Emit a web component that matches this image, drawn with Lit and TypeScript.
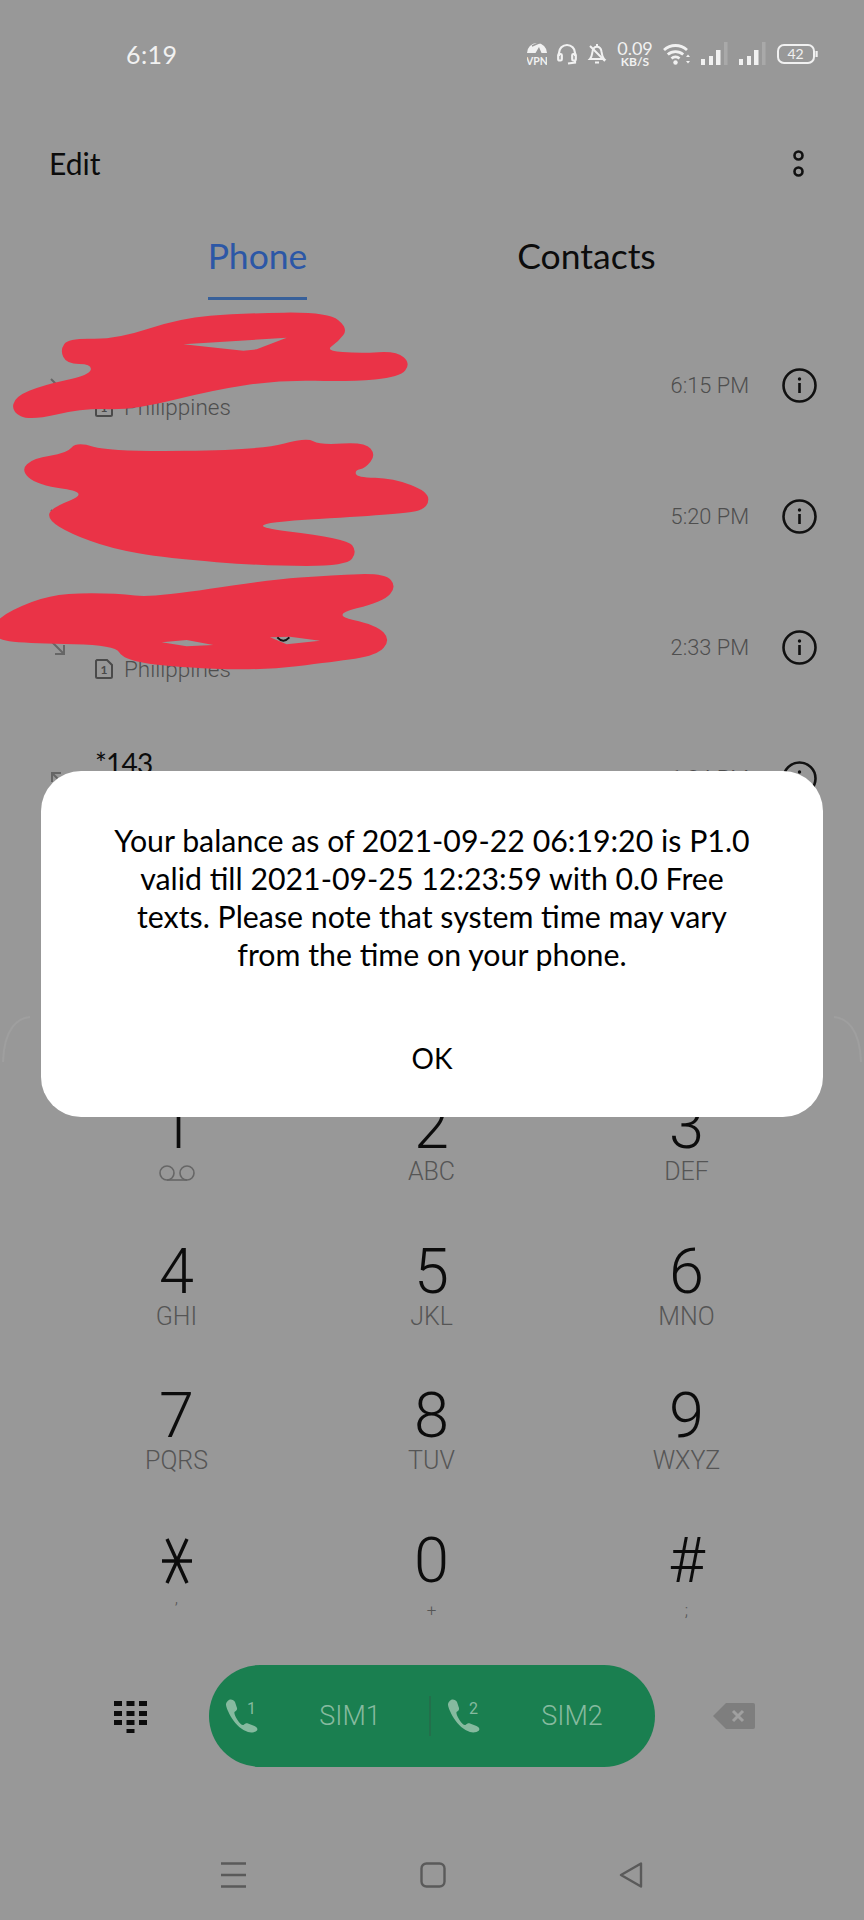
import { LitElement, css, html, svg } from "lit";
import { customElement } from "lit/decorators.js";

type Pt = [number, number];

// rounds off a traced outline so the marker strokes look hand drawn
function blob(points: Pt[]): string {
  const mid = (a: Pt, b: Pt) => `${(a[0] + b[0]) / 2} ${(a[1] + b[1]) / 2}`;
  let d = `M${mid(points[points.length - 1], points[0])}`;
  points.forEach((p, i) => {
    d += ` Q${p[0]} ${p[1]} ${mid(p, points[(i + 1) % points.length])}`;
  });
  return d + " Z";
}

const scribbles = [
  blob([[180, 150], [205, 115], [350, 118], [540, 55], [720, 40], [985, 36], [1045, 85], [1015, 125], [975, 152], [1080, 160], [1190, 153], [1232, 190], [1200, 232], [1050, 245], [840, 240], [640, 270], [400, 330], [250, 325], [90, 362], [35, 335], [45, 290], [130, 255], [270, 225], [275, 192], [200, 192]]) +
    " M550 133 L860 113 L770 148 L730 152 Z",
  blob([[62, 510], [100, 475], [200, 460], [230, 425], [330, 455], [780, 450], [920, 412], [960, 435], [1095, 426], [1128, 465], [1095, 505], [1065, 510], [1070, 532], [1180, 535], [1285, 575], [1285, 620], [1230, 642], [680, 672], [1040, 715], [1072, 755], [1040, 798], [800, 798], [500, 775], [330, 745], [210, 700], [145, 660], [150, 625], [270, 578], [110, 555]]),
  blob([[-20, 960], [100, 900], [200, 880], [350, 880], [460, 893], [800, 840], [1000, 825], [1155, 820], [1190, 860], [1150, 905], [990, 945], [1130, 975], [1172, 1020], [1130, 1067], [1000, 1085], [780, 1112], [500, 1100], [370, 1078], [345, 1035], [100, 1030], [-20, 1020]]) +
    " M485 1027 L560 1020 L640 1035 L560 1039 Z M810 1012 L870 1010 L960 1022 L860 1033 Z",
];

const calls = [
  { name: "", time: "6:15 PM", dir: "in", sub: true },
  { name: "", time: "5:20 PM", dir: "in", sub: false },
  { name: "", time: "2:33 PM", dir: "in", sub: true },
  { name: "*143", time: "1:34 PM", dir: "out", sub: true },
];

const keys = [
  ["1", ""], ["2", "ABC"], ["3", "DEF"],
  ["4", "GHI"], ["5", "JKL"], ["6", "MNO"],
  ["7", "PQRS"], ["8", "TUV"], ["9", "WXYZ"],
  ["*", ","], ["0", "+"], ["#", ";"],
];

const handset = "M4 1C6 0 9 1 10 3L12 9C12.5 11 11 12 9.5 13C9 14 10 17 12.5 21C15 25 17 26.5 18.5 26C20 24.5 21.5 24 23 24.5L29.5 27C32 28 33 30 32 31.5C30 33.5 26 34 23 33C17 31 11 26 7 19.5C3 13 1 8 1 5.5C1 3.5 2.5 2 4 1Z";

const simCall = (n: string) => html`
  <svg class="handset" viewBox="0 0 34 34" width="34" height="34">
    <path d=${handset} fill="#86ba9f"></path>
    <text x="22" y="15" class="sim-num">${n}</text>
  </svg>`;

const signal = html`
  <svg viewBox="0 0 28 24" width="28" height="24" fill="#f1f1f1">
    <rect x="0" y="17" width="4" height="6"></rect>
    <rect x="8" y="14" width="4" height="9"></rect>
    <rect x="15" y="8" width="4.5" height="15"></rect>
    <rect x="23" y="0" width="3.5" height="23" fill="#a9a9a9"></rect>
  </svg>`;

@customElement("app-root")
export class AppRoot extends LitElement {
  static styles = css`
    :host {
      display: block;
      position: relative;
      width: 864px;
      height: 1920px;
      overflow: hidden;
      background: #989898;
      font-family: "Lato", "Liberation Sans", sans-serif;
      color: #0c0c0c;
    }

    .status {
      height: 108px;
      display: flex;
      align-items: center;
      justify-content: space-between;
      padding: 0 46px 0 126px;
      box-sizing: border-box;
      color: #f1f1f1;
    }
    .clock {
      font-size: 25px;
      letter-spacing: 0.4px;
    }
    .status-icons {
      display: flex;
      align-items: center;
      gap: 10px;
    }
    .vpn {
      margin-bottom: 6px;
    }
    .speed {
      width: 36px;
      display: flex;
      flex-direction: column;
      align-items: center;
    }
    .speed b {
      font-size: 18px;
      line-height: 15px;
      font-weight: 400;
    }
    .speed span {
      font-size: 12px;
      line-height: 12px;
      font-weight: 700;
    }
    .vpn-text {
      font: 700 10.5px "Lato", sans-serif;
      fill: #f1f1f1;
    }
    .batt-text {
      font: 400 14px "Lato", sans-serif;
      fill: #f1f1f1;
    }

    .topbar {
      height: 110px;
      display: flex;
      align-items: center;
      justify-content: space-between;
      padding: 0 60px 0 49px;
      font-size: 30px;
    }

    .tabs {
      height: 82px;
      display: grid;
      grid-template-columns: 329px 329px;
      padding-left: 93px;
      font-size: 35.5px;
      text-align: center;
    }
    .tab {
      justify-self: center;
      padding-top: 15px;
      line-height: 46px;
      box-sizing: border-box;
    }
    .tab.active {
      color: #2c57a6;
      border-bottom: 3px solid #38609a;
      width: 99px;
      height: 82px;
      white-space: nowrap;
      display: flex;
      justify-content: center;
    }

    .calls {
      height: 757px;
      margin-top: 20px;
    }
    .call {
      height: 131px;
      display: grid;
      grid-template-columns: 45px 1fr auto 35px;
      align-items: center;
      padding: 0 47px 0 50px;
    }
    .who {
      padding-top: 6px;
    }
    .name {
      height: 36px;
      line-height: 32px;
      font-size: 28px;
      letter-spacing: -0.8px;
    }
    .sub {
      display: flex;
      align-items: center;
      gap: 11px;
      height: 34px;
      font: 300 22.5px "Roboto", sans-serif;
      color: #4e4e4e;
    }
    .when {
      font: 300 21.8px "Roboto", sans-serif;
      color: #4e4e4e;
      margin-right: 33px;
    }
    .sim-digit {
      font: 700 12px "Lato", sans-serif;
      fill: #4a4a4a;
    }

    .scribbles {
      position: absolute;
      left: 0;
      top: 300px;
    }

    .pad {
      display: grid;
      grid-template-columns: 255px 255px 255px;
      grid-auto-rows: 144.5px;
      padding-left: 49px;
    }
    .key {
      display: flex;
      flex-direction: column;
      align-items: center;
      padding-top: 20px;
      box-sizing: border-box;
    }
    .digit {
      height: 60px;
      font: 300 63px/60px "Roboto", sans-serif;
      color: #0c0c0c;
    }
    .letters {
      height: 32px;
      font: 300 25px/30px "Roboto", sans-serif;
      color: #555;
    }
    .letters.small {
      font-size: 17px;
      line-height: 38px;
    }
    .letters.comma {
      line-height: 14px;
    }

    .actions {
      margin-top: 10px;
      height: 102px;
      display: flex;
      align-items: center;
      padding-left: 114px;
    }
    .pill {
      width: 446px;
      height: 102px;
      margin: 0 58px 0 61px;
      border-radius: 51px;
      background: #1a7f50;
      display: grid;
      grid-template-columns: 220px 2px 224px;
      align-items: center;
      color: #86ba9f;
      font: 300 27px "Roboto", sans-serif;
    }
    .sim {
      display: flex;
      align-items: center;
      padding-left: 16px;
    }
    .handset {
      flex: none;
    }
    .sim span {
      flex: none;
      width: 158px;
      margin-left: 12px;
      text-align: center;
    }
    .sim-num {
      font: 400 16px "Roboto", sans-serif;
      fill: #86ba9f;
    }
    .split {
      height: 40px;
      background: #236f4b;
    }

    .nav {
      margin-top: 96px;
      display: flex;
      align-items: center;
      height: 24px;
      padding-left: 221px;
    }
    .nav svg {
      display: block;
    }
    .nav .home {
      margin-left: 174px;
    }
    .nav .back {
      margin-left: 173px;
    }

    .edge {
      position: absolute;
      top: 1014px;
    }
    .edge.right {
      right: 0;
      transform: scaleX(-1);
    }

    .dialog {
      position: absolute;
      left: 41px;
      top: 771px;
      width: 782px;
      height: 346px;
      box-sizing: border-box;
      padding-top: 50px;
      border-radius: 40px;
      background: #fff;
      color: #000;
      text-align: center;
      font-size: 30.3px;
      line-height: 38px;
    }
    .dialog p {
      margin: 0 auto;
      width: 652px;
    }
    .ok {
      margin-top: 66px;
      font-size: 28px;
    }
  `;

  arrow(dir: string) {
    return dir === "in"
      ? html`<svg viewBox="0 0 16 16" width="16" height="16" fill="none" stroke="#666" stroke-width="2"><path d="M1 1L14 14M14 5V14H5"></path></svg>`
      : html`<svg viewBox="0 0 16 16" width="16" height="16" fill="none" stroke="#666" stroke-width="2"><path d="M15 15L2 2M2 11V2H11"></path></svg>`;
  }

  info() {
    return html`<svg viewBox="0 0 35 35" width="35" height="35">
      <circle cx="17.5" cy="17.5" r="16" fill="none" stroke="#111" stroke-width="2.6"></circle>
      <circle cx="17.5" cy="11" r="1.7" fill="#111"></circle>
      <rect x="16.2" y="15" width="2.6" height="10" fill="#111"></rect>
    </svg>`;
  }

  statusIcons() {
    return html`
      <svg class="vpn" viewBox="0 0 20 29" width="20" height="29">
        <path d="M0 16A10 10 0 0 1 20 16H14.5L12 10L8.5 16Z" fill="#f1f1f1"></path>
        <path d="M5 9L14 5" stroke="#989898" stroke-width="1.4"></path>
        <text x="10" y="28" text-anchor="middle" class="vpn-text">VPN</text>
      </svg>
      <svg viewBox="0 0 20 22" width="20" height="22" fill="none" stroke="#f1f1f1" stroke-width="2.2">
        <path d="M2 13V10A8 8 0 0 1 18 10V13"></path>
        <rect x="1.2" y="11" width="3.6" height="6.5" rx="1.2"></rect>
        <rect x="15.2" y="11" width="3.6" height="6.5" rx="1.2"></rect>
        <path d="M18 17.5V19.5L11 20.5"></path>
      </svg>
      <svg viewBox="0 0 20 22" width="20" height="22" fill="none" stroke="#f1f1f1" stroke-width="2">
        <path d="M3 16C5 14 5 11 5.5 8.5C6 5.5 8 3.8 10 3.8C12 3.8 14 5.5 14.5 8.5C15 11 15 14 17 16Z"></path>
        <path d="M10 1V3.5M8 19.5H12M3 3L18 18"></path>
      </svg>
      <div class="speed"><b>0.09</b><span>KB/S</span></div>
      <svg viewBox="0 0 28 22" width="28" height="22" fill="none" stroke="#f1f1f1" stroke-width="2.8">
        <path d="M1 7A17 17 0 0 1 24 7M4.8 11.5A11.5 11.5 0 0 1 20.2 11.5M8.5 15.5A6 6 0 0 1 16.5 15.5"></path>
        <circle cx="12.5" cy="19.5" r="2.2" fill="#f1f1f1" stroke="none"></circle>
        <path d="M25 11.5L23 14H27ZM25 20.5L23 18H27Z" fill="#f1f1f1" stroke="none"></path>
      </svg>
      ${signal}${signal}
      <svg viewBox="0 0 41 20" width="41" height="20">
        <rect x="1" y="1" width="36" height="18" rx="6" fill="none" stroke="#f1f1f1" stroke-width="2"></rect>
        <rect x="38.5" y="7" width="2.2" height="6" fill="#f1f1f1"></rect>
        <text x="18.5" y="15" text-anchor="middle" class="batt-text">42</text>
      </svg>`;
  }

  keyDigit(d: string) {
    if (d !== "*") return html`<div class="digit">${d}</div>`;
    return html`<div class="digit"><svg viewBox="0 0 34 60" width="34" height="60" fill="none" stroke="#0c0c0c" stroke-width="3.4">
      <path d="M7 8L27 52M27 8L7 52M2 30H32"></path>
    </svg></div>`;
  }

  keyLetters(d: string, l: string) {
    if (d === "1") {
      return html`<div class="letters"><svg viewBox="0 0 38 32" width="38" height="32" fill="none" stroke="#666" stroke-width="1.6">
        <circle cx="9" cy="16" r="7"></circle><circle cx="29" cy="16" r="7"></circle><path d="M9 23H29"></path>
      </svg></div>`;
    }
    const extra = l === "," ? "small comma" : l.length === 1 ? "small" : "";
    return html`<div class="letters ${extra}">${l}</div>`;
  }

  render() {
    return html`
      <div class="status">
        <div class="clock">6:19</div>
        <div class="status-icons">${this.statusIcons()}</div>
      </div>

      <div class="topbar">
        <span>Edit</span>
        <svg viewBox="0 0 11 27" width="11" height="27" fill="none" stroke="#111" stroke-width="2.6">
          <circle cx="5.5" cy="5.5" r="4"></circle>
          <circle cx="5.5" cy="21.5" r="4"></circle>
        </svg>
      </div>

      <div class="tabs">
        <div class="tab active">Phone</div>
        <div class="tab">Contacts</div>
      </div>

      <div class="calls">
        ${calls.map(
          (c) => html`
            <div class="call">
              ${this.arrow(c.dir)}
              <div class="who">
                <div class="name">${c.name}</div>
                ${c.sub
                  ? html`<div class="sub">
                      <svg viewBox="0 0 18 20" width="18" height="20">
                        <path d="M2 1H12L17 6V17.5A1.5 1.5 0 0 1 15.5 19H2.5A1.5 1.5 0 0 1 1 17.5V2Z" fill="none" stroke="#4a4a4a" stroke-width="2"></path>
                        <text x="9" y="15" text-anchor="middle" class="sim-digit">1</text>
                      </svg>
                      <span>Philippines</span>
                    </div>`
                  : html`<div class="sub"></div>`}
              </div>
              <div class="when">${c.time}</div>
              ${this.info()}
            </div>
          `
        )}
      </div>

      <div class="pad">
        ${keys.map(
          ([d, l]) => html`
            <div class="key">
              ${this.keyDigit(d)}
              ${this.keyLetters(d, l)}
            </div>
          `
        )}
      </div>

      <div class="actions">
        <svg viewBox="0 0 34 34" width="34" height="34" fill="#0c0c0c">
          ${[2, 12, 21].map((y) =>
            [0, 12.5, 25].map((x) => svg`<rect x=${x} y=${y} width="8" height="5"></rect>`)
          )}
          <rect x="12.5" y="30" width="8" height="4"></rect>
        </svg>
        <div class="pill">
          <div class="sim">${simCall("1")}<span>SIM1</span></div>
          <div class="split"></div>
          <div class="sim">${simCall("2")}<span>SIM2</span></div>
        </div>
        <svg viewBox="0 0 42 26" width="42" height="26">
          <path d="M13 0H40A2 2 0 0 1 42 2V24A2 2 0 0 1 40 26H13L0 13Z" fill="#7e7e7e"></path>
          <path d="M20 8L30 18M30 8L20 18" stroke="#a0a0a0" stroke-width="3"></path>
        </svg>
      </div>

      <div class="nav">
        <svg viewBox="0 0 25 26" width="25" height="26" stroke="#5a5a5a" stroke-width="2.4">
          <path d="M0 1.5H25M0 13H25M0 24.5H25"></path>
        </svg>
        <svg class="home" viewBox="0 0 26 26" width="26" height="26" fill="none" stroke="#5a5a5a" stroke-width="2.4">
          <rect x="1.5" y="1.5" width="23" height="23" rx="5"></rect>
        </svg>
        <svg class="back" viewBox="0 0 24 26" width="24" height="26" fill="none" stroke="#5a5a5a" stroke-width="2.4" stroke-linejoin="round">
          <path d="M2 13L22 1.5V24.5Z"></path>
        </svg>
      </div>

      <svg class="scribbles" viewBox="0 0 1320 1200" width="440" height="400" fill="#ea3347" fill-rule="evenodd">
        ${scribbles.map((d) => svg`<path d=${d}></path>`)}
        <path d="M832 1012Q850 1032 868 1012" fill="none" stroke="#111" stroke-width="6"></path>
      </svg>

      <svg class="edge" viewBox="0 0 32 50" width="32" height="50" fill="none" stroke="#9f9f9f" stroke-width="2">
        <path d="M30 3C18 4 4 14 3 48"></path>
      </svg>
      <svg class="edge right" viewBox="0 0 32 50" width="32" height="50" fill="none" stroke="#9f9f9f" stroke-width="2">
        <path d="M30 3C18 4 4 14 3 48"></path>
      </svg>

      <div class="dialog">
        <p>Your balance as of 2021-09-22 06:19:20 is P1.0 valid till 2021-09-25 12:23:59 with 0.0 Free texts. Please note that system time may vary from the time on your phone.</p>
        <div class="ok">OK</div>
      </div>
    `;
  }
}
